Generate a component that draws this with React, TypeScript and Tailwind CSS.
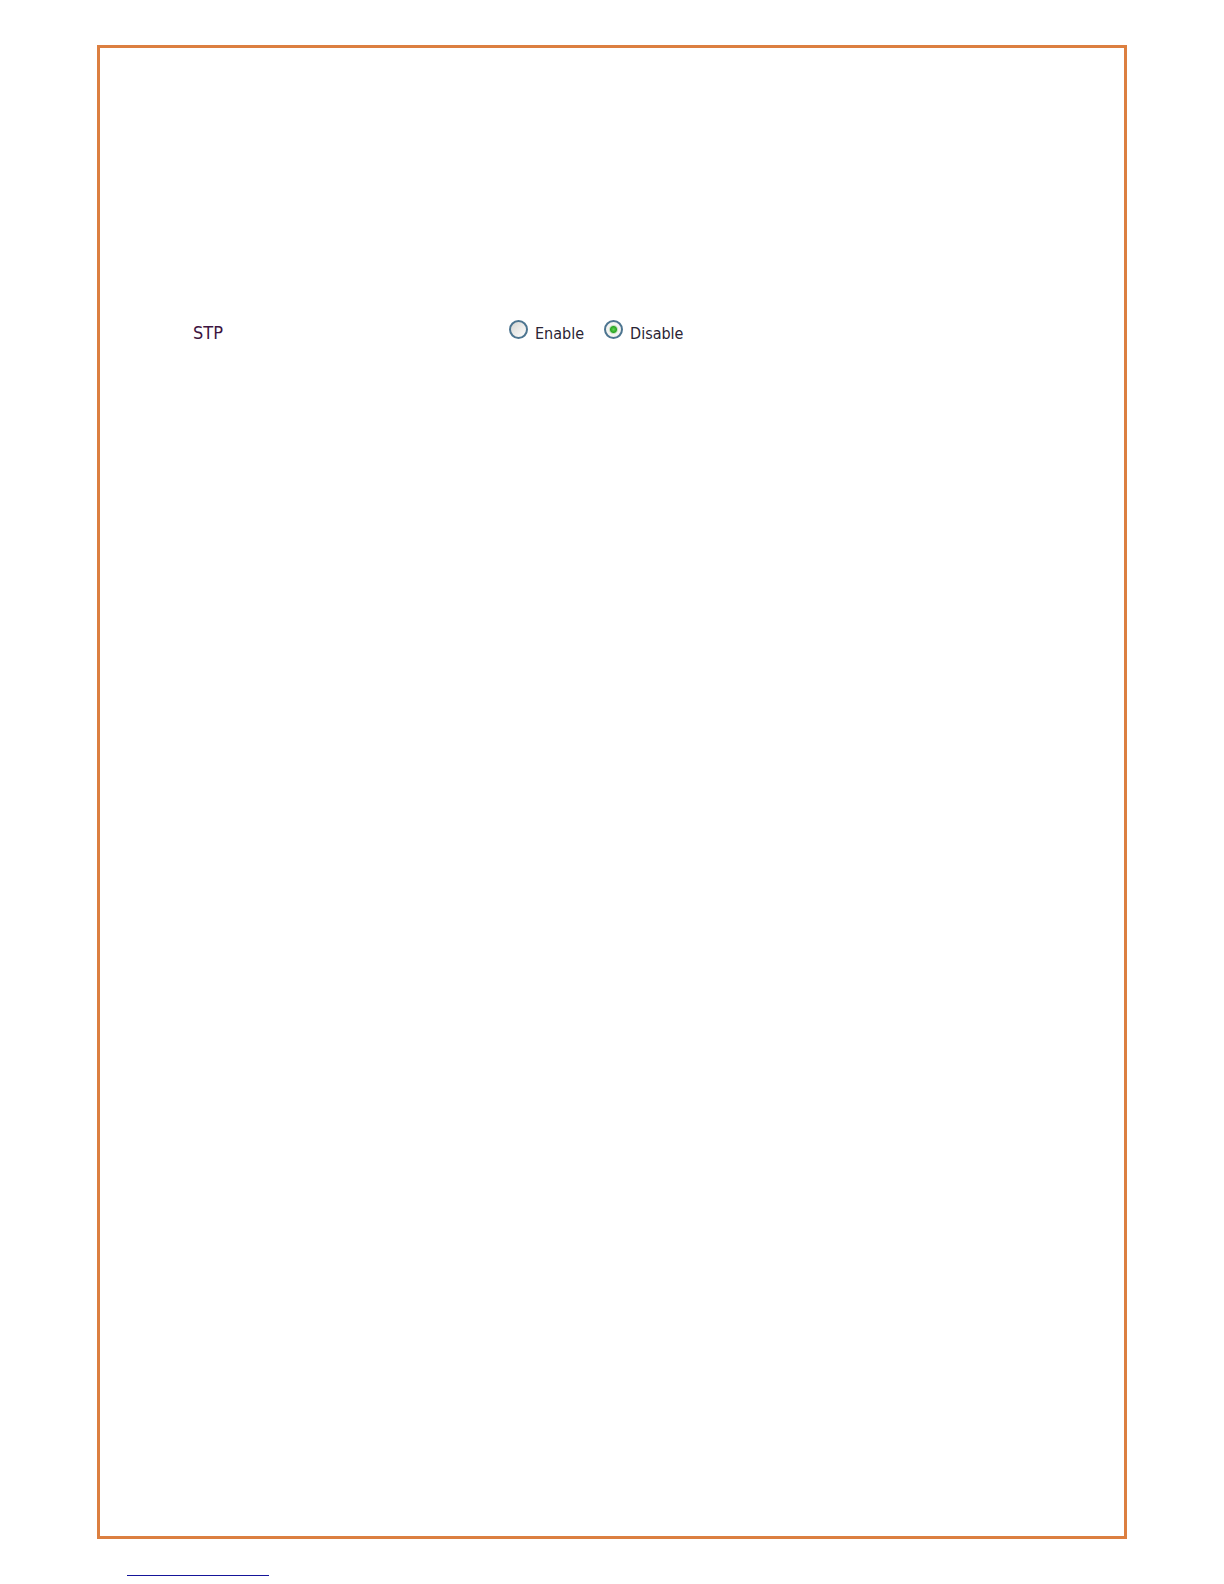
import { useState } from "react";

const options = ["Enable", "Disable"];

const StpSetting = () => {
  const [stp, setStp] = useState("Disable");

  return (
    <div role="radiogroup" aria-labelledby="stp-label" className="flex items-start text-base leading-5 text-[#2a2433]">
      <div id="stp-label" className="w-[316px] shrink-0 pt-[3px] text-lg leading-5 text-[#3d1440]">
        STP
      </div>
      <div className="flex gap-5">
        {options.map((option) => (
          <label key={option} className="flex items-start gap-[7px]">
            <input
              type="radio"
              name="stp"
              value={option}
              checked={stp === option}
              onChange={() => setStp(option)}
              className="size-[19px] shrink-0 appearance-none rounded-full border-2 border-[#4d7590] bg-linear-to-br from-[#d6d6d2] to-white checked:bg-[radial-gradient(circle,#5fd352_0px,#2ca524_3px,#c4e2c0_4px,#f4f4f1_5px)]"
            />
            <span className="pt-1">{option}</span>
          </label>
        ))}
      </div>
    </div>
  );
};

const App = () => {
  return (
    <div className="flex min-h-screen flex-col bg-white px-[97px] pt-[45px] font-['DejaVu_Sans_Condensed','DejaVu_Sans',sans-serif]">
      <main className="flex-1 border-3 border-[#dc7f40] px-[93px] pt-[272px]">
        <StpSetting />
      </main>

      <footer className="h-[45px] px-[30px] pt-9">
        <div className="w-[142px] border-t border-[#15159a]" />
      </footer>
    </div>
  );
};

export default App;
